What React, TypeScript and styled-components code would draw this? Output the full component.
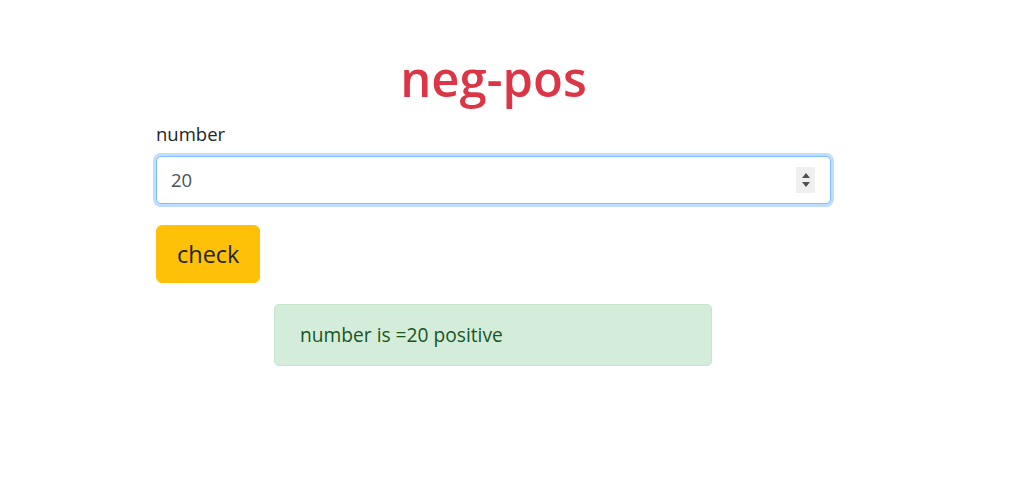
import React from "react";
import styled, { createGlobalStyle } from "styled-components";

const Global = createGlobalStyle`
  html, body { margin: 0; padding: 0; background: #fff; }
  body {
    font-family: "Open Sans", "Noto Sans", sans-serif;
    color: #212529;
    font-size: 18.5px;
    line-height: 1.5;
  }
  * { box-sizing: border-box; }
`;

const Main = styled.main`
  width: 675px;
  margin: 0 0 0 156px;
  padding-top: 49px;
  display: flex;
  flex-direction: column;
`;

const Title = styled.h1`
  margin: 0 0 11px;
  text-align: center;
  color: #dc3545;
  font-size: 49px;
  font-weight: 600;
  line-height: 1.2;
`;

const Label = styled.label`
  display: block;
  font-size: 18.5px;
  line-height: 30px;
  margin-bottom: 7px;
`;

const Field = styled.div`
  position: relative;
`;

const Input = styled.input`
  display: block;
  width: 100%;
  height: 48px;
  padding: 7px 14px;
  font-family: inherit;
  font-size: 18.5px;
  line-height: 30px;
  color: #495057;
  background: #fff;
  border: 1px solid #80bdff;
  border-radius: 5px;
  outline: 0;
  box-shadow: 0 0 0 3px rgba(0, 123, 255, 0.25);
  -moz-appearance: textfield;
  &::-webkit-inner-spin-button,
  &::-webkit-outer-spin-button {
    -webkit-appearance: none;
    margin: 0;
  }
`;

const Spinner = styled.div`
  position: absolute;
  right: 16px;
  top: 11px;
  width: 19px;
  height: 26px;
  background: #efefef;
  display: flex;
  flex-direction: column;
  align-items: center;
  justify-content: center;
  gap: 4px;
  pointer-events: none;
`;

const Arrow = styled.span<{ $up?: boolean }>`
  width: 0;
  height: 0;
  border-left: 4.5px solid transparent;
  border-right: 4.5px solid transparent;
  ${(p) =>
    p.$up ? "border-bottom: 5px solid #505050;" : "border-top: 5px solid #505050;"}
`;

const Button = styled.button`
  align-self: flex-start;
  margin-top: 21px;
  padding: 10px 20px;
  font-family: inherit;
  font-size: 23.5px;
  line-height: 36px;
  color: #212529;
  background: #ffc107;
  border: 1px solid #ffc107;
  border-radius: 6px;
  cursor: pointer;
`;

const Alert = styled.div`
  align-self: center;
  width: 438px;
  margin: 21px 0 0 118px;
  align-self: flex-start;
  padding: 15px 25px;
  font-size: 19.2px;
  line-height: 30px;
  color: #155724;
  background: #d4edda;
  border: 1px solid #c3e6cb;
  border-radius: 5px;
`;

export default function App() {
  return (
    <>
      <Global />
      <Main>
        <Title>neg-pos</Title>
        <Label htmlFor="num">number</Label>
        <Field>
          <Input id="num" type="number" defaultValue="20" autoFocus />
          <Spinner>
            <Arrow $up />
            <Arrow />
          </Spinner>
        </Field>
        <Button type="button">check</Button>
        <Alert>number is =20 positive</Alert>
      </Main>
    </>
  );
}
